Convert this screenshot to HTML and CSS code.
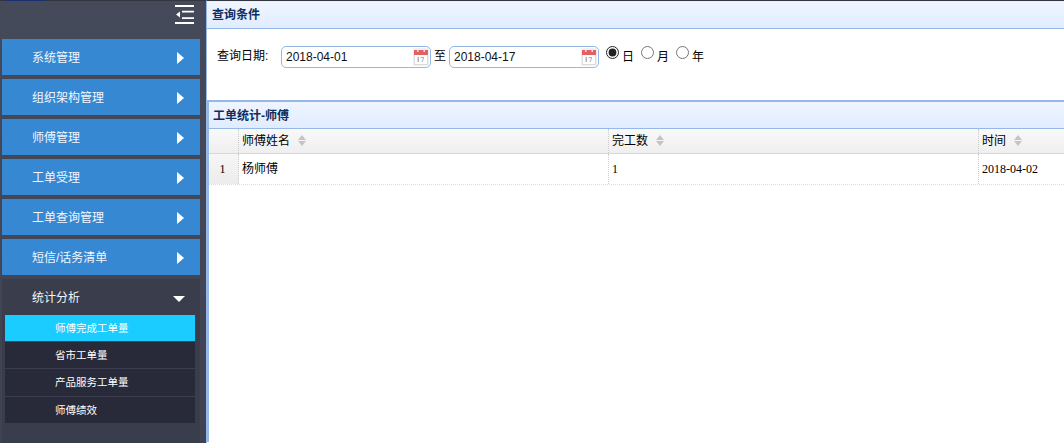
FILE: index.html
```html
<!DOCTYPE html>
<html lang="zh">
<head>
<meta charset="utf-8">
<title>工单统计-师傅</title>
<link rel="stylesheet" href="styles.css">
</head>
<body>
<div class="app">
  <aside class="sidebar">
    <div class="topmark"></div>
    <div class="toggle-row">
      <svg class="toggle" width="19" height="19" viewBox="0 0 19 19">
        <path d="M0 0H19V2H0zM7 5.800H19V7.600H7zM7 12.300H19V14H7zM0 17H19V19H0z" fill="#fff"/>
        <path d="M5 6.500V12.500L1 9.500z" fill="#fff"/>
      </svg>
    </div>
    <nav class="menu">
      <a class="item">系统管理<i class="arr-r"></i></a>
      <a class="item">组织架构管理<i class="arr-r"></i></a>
      <a class="item">师傅管理<i class="arr-r"></i></a>
      <a class="item">工单受理<i class="arr-r"></i></a>
      <a class="item">工单查询管理<i class="arr-r"></i></a>
      <a class="item">短信/话务清单<i class="arr-r"></i></a>
      <div class="group">
        <a class="item open">统计分析<i class="arr-d"></i></a>
        <ul class="sub">
          <li class="active">师傅完成工单量</li>
          <li>省市工单量</li>
          <li>产品服务工单量</li>
          <li>师傅绩效</li>
        </ul>
      </div>
    </nav>
  </aside>
  <main class="main">
    <section class="panel query">
      <h2 class="head">查询条件</h2>
      <form class="form">
        <span class="label">查询日期:</span>
        <span class="date"><span class="val">2018-04-01</span>
          <svg class="cal" width="16" height="18" viewBox="0 0 16 18"><rect x="0" y="0" width="16" height="18" fill="#eef1f5"/><rect x="1.500" y="2.500" width="13" height="14" fill="#fff" stroke="#dcdcdc"/><rect x="1" y="2" width="14" height="5" fill="#e2605f"/><rect x="4" y="1" width="1.500" height="3" fill="#e4e4e4"/><rect x="10.500" y="1" width="1.500" height="3" fill="#e4e4e4"/><path d="M4.500 9H6V14H4.500zM7.500 9H11V10L9.500 14H8.500L10 10H7.500z" fill="#b0b0b0"/></svg></span>
        <span class="to">至</span>
        <span class="date"><span class="val">2018-04-17</span>
          <svg class="cal" width="16" height="18" viewBox="0 0 16 18"><rect x="0" y="0" width="16" height="18" fill="#eef1f5"/><rect x="1.500" y="2.500" width="13" height="14" fill="#fff" stroke="#dcdcdc"/><rect x="1" y="2" width="14" height="5" fill="#e2605f"/><rect x="4" y="1" width="1.500" height="3" fill="#e4e4e4"/><rect x="10.500" y="1" width="1.500" height="3" fill="#e4e4e4"/><path d="M4.500 9H6V14H4.500zM7.500 9H11V10L9.500 14H8.500L10 10H7.500z" fill="#b0b0b0"/></svg></span>
        <label class="radio"><input type="radio" name="g" checked><span>日</span></label>
        <label class="radio"><input type="radio" name="g"><span>月</span></label>
        <label class="radio"><input type="radio" name="g"><span>年</span></label>
      </form>
    </section>
    <section class="panel result">
      <h2 class="head">工单统计-师傅</h2>
      <div class="thead">
        <div class="c num"></div>
        <div class="c name">师傅姓名<i class="sort"></i></div>
        <div class="c done">完工数<i class="sort"></i></div>
        <div class="c time">时间<i class="sort"></i></div>
      </div>
      <div class="trow">
        <div class="c num">1</div>
        <div class="c name">杨师傅</div>
        <div class="c done">1</div>
        <div class="c time">2018-04-02</div>
      </div>
    </section>
  </main>
</div>
</body>
</html>
```
FILE: styles.css
```css
html, body { margin: 0; padding: 0; height: 100%; overflow: hidden; background: #fff; }
* { box-sizing: border-box; }
.app { display: flex; height: 443px; width: 1064px; font-family: "Liberation Sans", "Noto Sans CJK SC", sans-serif; font-size: 12px; color: #000; }
.sidebar { position: relative; width: 206px; flex: none; display: flex; flex-direction: column; background: linear-gradient(#454a5a, #3f4251); border-top: 1px solid #33363f; padding: 0 6px 0 2px; }
.topmark { position: absolute; left: 6px; top: -1px; width: 40px; height: 1px; background: #1b2f6e; }
.toggle-row { height: 38px; flex: none; display: flex; justify-content: flex-end; padding-top: 4px; }
.toggle { margin-right: 6px; }
.menu { flex: 1; display: flex; flex-direction: column; gap: 4px; min-height: 0; }
.item { display: flex; flex: none; align-items: center; height: 36px; background: #3788d3; color: #f2f6fb; font-size: 12px; padding: 0 0 2px 30px; position: relative; }
.arr-r { position: absolute; left: 175px; top: 13px; border-left: 7px solid #fff; border-top: 6px solid transparent; border-bottom: 6px solid transparent; }
.arr-d { position: absolute; left: 171px; top: 17px; border-top: 6px solid #fff; border-left: 6px solid transparent; border-right: 6px solid transparent; }
.group { flex: 1; background: #3a3d4c; }
.item.open { background: transparent; }
.sub { list-style: none; margin: 0 5px 0 3px; padding: 0; }
.sub li { height: 27px; line-height: 27px; padding-left: 50px; background: #282a39; color: #fff; font-size: 10.500px; border-bottom: 1px solid #3c3e50; }
.sub li.active { background: #1accff; border-bottom-color: #28506a; }
.sub li:nth-child(3) { height: 28px; }
.sub li:last-child { height: 26px; border-bottom: 0; }
.main { flex: 1; min-width: 0; border-left: 1px solid #95b8e7; border-top: 1px solid #33363f; }
.head { margin: 0; height: 27px; border-bottom: 1px solid #95b8e7; background: linear-gradient(#eff5ff, #e0ecff); color: #0e2d5f; font-size: 12px; font-weight: bold; line-height: 26px; padding-left: 5px; }
.panel.query { height: 99px; border-top: 1px solid #e6eefc; }
.form { display: flex; align-items: flex-start; padding: 17px 0 0 10px; }
.label { width: 64px; line-height: 20px; }
.date { width: 150px; height: 22px; border: 1px solid #95b8e7; border-radius: 5px; display: flex; align-items: center; justify-content: space-between; padding: 0 0 0 4px; }
.val { color: #111; }
.cal { margin-right: 1px; }
.to { width: 18px; text-align: center; line-height: 20px; }
.radio { display: inline-flex; margin-left: 7px; line-height: 20px; }
.radio input { margin: 0 3px 0 0; width: 13px; height: 13px; accent-color: #222; }
.radio span { margin-top: 1px; }
.panel.result { min-height: 342px; border-top: 2px solid #95b8e7; border-left: 2px solid #95b8e7; }
.result .head { line-height: 28px; padding-left: 4px; }
.thead, .trow { display: flex; }
.thead { height: 25px; background: linear-gradient(#f9f9f9, #efefef); border-bottom: 1px solid #d8d8d8; line-height: 25px; }
.trow { height: 31px; line-height: 30px; border-bottom: 1px dotted #ddd; font-family: "Liberation Serif", "Noto Sans CJK SC", serif; }
.c { border-right: 1px dotted #ccc; padding-left: 3px; flex: none; }
.num { width: 30px; }
.trow .num { background: linear-gradient(#f6f6f6, #ececec); text-align: center; padding: 0 2px 0 0; }
.name { width: 370px; }
.done { width: 370px; }
.time { border-right: 0; width: 90px; }
.sort { display: inline-block; width: 9px; height: 11px; margin-left: 8px; vertical-align: -1px; position: relative; }
.sort::before { content: ""; position: absolute; left: 0; top: 0; border-bottom: 5px solid #c4c4c4; border-left: 4.500px solid transparent; border-right: 4.500px solid transparent; }
.sort::after { content: ""; position: absolute; left: 0; bottom: 0; border-top: 5px solid #c4c4c4; border-left: 4.500px solid transparent; border-right: 4.500px solid transparent; }
```
